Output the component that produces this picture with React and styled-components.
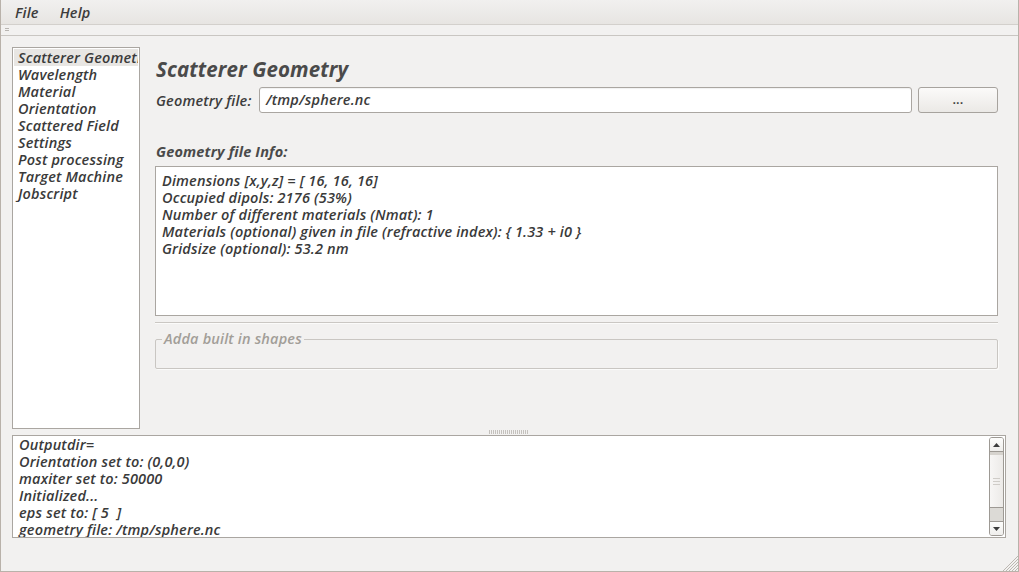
import React from "react";
import styled, { createGlobalStyle } from "styled-components";

const Global = createGlobalStyle`
  html, body { margin: 0; padding: 0; background: #f2f1f0; }
  body { font-family: "Open Sans", "DejaVu Sans", sans-serif; font-style: italic; font-weight: 600; color: #3c3c3c; letter-spacing: 0.17px; }
  * { box-sizing: border-box; }
`;

const Window = styled.div`
  width: 1019px;
  height: 572px;
  background: #f2f1f0;
  border-left: 1px solid #b9b2aa;
  border-right: 1px solid #b9b2aa;
  border-bottom: 1px solid #b9b2aa;
  display: flex;
  flex-direction: column;
  position: relative;
  overflow: hidden;
  font-size: 14.5px;
`;

const MenuBar = styled.div`
  height: 25px;
  display: flex;
  align-items: center;
  padding-left: 14px;
  gap: 21px;
  background: linear-gradient(#f1f0ef, #e7e5e2);
  border-bottom: 1px solid #d3d0cc;
`;

const MenuItem = styled.span`
  font-size: 14.5px;
  color: #3c3c3c;
`;

const ToolStrip = styled.div`
  height: 11px;
  border-bottom: 1px solid #c9c6c2;
  display: flex;
  align-items: center;
  padding-left: 4px;
`;

const Grip = styled.div`
  width: 4px;
  height: 3px;
  border-top: 1px solid #b8b5b1;
  border-bottom: 1px solid #b8b5b1;
  margin-top: -2px;
`;

const Body = styled.div`
  flex: 1;
  display: flex;
  flex-direction: column;
  padding: 11px 12px 0 11px;
`;

const TopArea = styled.div`
  display: flex;
  height: 382px;
  gap: 15px;
`;

const NavList = styled.div`
  width: 128px;
  height: 382px;
  background: #fff;
  border: 1px solid #aaa6a1;
  padding: 1px;
`;

const NavItem = styled.div`
  height: 17px;
  line-height: 17px;
  padding-left: 4px;
  font-size: 14.5px;
  white-space: nowrap;
  overflow: hidden;
  color: #3a3a3a;
  background: ${(p) => (p.$selected ? "#e8e6e3" : "transparent")};
`;

const Panel = styled.div`
  width: 843px;
  display: flex;
  flex-direction: column;
  padding-top: 9px;
`;

const Title = styled.div`
  font-size: 20.5px;
  font-weight: 700;
  letter-spacing: 0.1px;
  color: #4a4a4a;
  height: 26px;
  line-height: 26px;
  padding-left: 1px;
`;

const FileRow = styled.div`
  display: flex;
  align-items: center;
  margin-top: 5px;
  height: 26px;
`;

const Label = styled.span`
  font-size: 14.5px;
  width: 104px;
  padding-left: 1px;
  color: #3c3c3c;
`;

const TextInput = styled.div`
  width: 653px;
  height: 26px;
  background: #fff;
  border: 1px solid #aaa6a1;
  border-radius: 3px;
  box-shadow: inset 0 1px 1px rgba(0,0,0,0.06);
  font-size: 14.5px;
  line-height: 24px;
  padding-left: 6px;
`;

const Button = styled.div`
  width: 80px;
  height: 26px;
  margin-left: 6px;
  border: 1px solid #a7a39e;
  border-radius: 3px;
  background: linear-gradient(#fbfaf9, #ebe9e6);
  display: flex;
  align-items: center;
  justify-content: center;
  font-size: 13px;
  font-style: normal;
  color: #3c3c3c;
  padding-bottom: 2px;
`;

const SectionLabel = styled.div`
  font-size: 14.5px;
  font-weight: 700;
  margin-top: 29px;
  height: 20px;
  line-height: 20px;
  padding-left: 1px;
  color: #4a4a4a;
`;

const InfoBox = styled.div`
  margin-top: 4px;
  height: 150px;
  background: #fff;
  border: 1px solid #aaa6a1;
  padding: 5px 6px;
`;

const Line = styled.div`
  height: 17px;
  line-height: 17px;
  font-size: 14.5px;
  white-space: pre;
  color: #3a3a3a;
`;

const Separator = styled.div`
  margin-top: 6px;
  height: 2px;
  border-top: 1px solid #cac7c3;
  border-bottom: 1px solid #fbfbfa;
`;

const GroupBox = styled.fieldset`
  margin: 7px 0 0 0;
  padding: 0;
  height: 38px;
  border: 1px solid #c9c6c2;
  border-radius: 2px;
  box-shadow: 1px 1px 0 #fbfbfa;
`;

const Legend = styled.legend`
  margin-left: 6px;
  padding: 0 2px;
  font-size: 14.5px;
  line-height: 16px;
  color: #a29e98;
`;

const SplitterHandle = styled.div`
  height: 6px;
  display: flex;
  justify-content: center;
  align-items: flex-start;
`;

const Dots = styled.div`
  width: 40px;
  height: 4px;
  background: repeating-linear-gradient(90deg, #c4c1bd 0 1px, transparent 1px 2px);
  margin-top: 1px;
`;

const LogBox = styled.div`
  width: 994px;
  height: 103px;
  background: #fff;
  border: 1px solid #aaa6a1;
  display: flex;
  overflow: hidden;
`;

const LogText = styled.div`
  flex: 1;
  padding: 0 6px;
  overflow: hidden;
`;

const ScrollBar = styled.div`
  width: 15px;
  margin: 1px 1px 1px 0;
  border: 1px solid #9d9994;
  border-radius: 3px;
  display: flex;
  flex-direction: column;
  background: #fff;
  overflow: hidden;
`;

const ArrowBtn = styled.div`
  height: 14px;
  display: flex;
  align-items: center;
  justify-content: center;
  background: linear-gradient(#fdfdfc, #efeeec);
  border-${(p) => (p.$up ? "bottom" : "top")}: 1px solid #9d9994;
`;

const Thumb = styled.div`
  height: 56px;
  background: linear-gradient(90deg, #f7f6f5, #eceae8);
  border-top: 3px solid #d6d3ce;
  border-bottom: 1px solid #9d9994;
  display: flex;
  flex-direction: column;
  align-items: center;
  justify-content: center;
  gap: 2px;
`;

const ThumbLine = styled.div`
  width: 7px;
  height: 1px;
  background: #cfccc8;
`;

const Track = styled.div`
  flex: 1;
  background: #dcdad6;
`;

const SizeGrip = styled.svg`
  position: absolute;
  right: 0;
  bottom: 0;
`;

const navItems = [
  "Scatterer Geometry",
  "Wavelength",
  "Material",
  "Orientation",
  "Scattered Field",
  "Settings",
  "Post processing",
  "Target Machine",
  "Jobscript",
];

const infoLines = [
  "Dimensions [x,y,z] = [ 16, 16, 16]",
  "Occupied dipols: 2176 (53%)",
  "Number of different materials (Nmat): 1",
  "Materials (optional) given in file (refractive index): { 1.33 + i0 }",
  "Gridsize (optional): 53.2 nm",
];

const logLines = [
  "Outputdir=",
  "Orientation set to: (0,0,0)",
  "maxiter set to: 50000",
  "Initialized...",
  "eps set to: [ 5  ]",
  "geometry file: /tmp/sphere.nc",
];

export default function App() {
  return (
    <>
      <Global />
      <Window>
        <MenuBar>
          <MenuItem>File</MenuItem>
          <MenuItem>Help</MenuItem>
        </MenuBar>
        <ToolStrip>
          <Grip />
        </ToolStrip>
        <Body>
          <TopArea>
            <NavList>
              {navItems.map((n, i) => (
                <NavItem key={n} $selected={i === 0}>{n}</NavItem>
              ))}
            </NavList>
            <Panel>
              <Title>Scatterer Geometry</Title>
              <FileRow>
                <Label>Geometry file:</Label>
                <TextInput>/tmp/sphere.nc</TextInput>
                <Button>...</Button>
              </FileRow>
              <SectionLabel>Geometry file Info:</SectionLabel>
              <InfoBox>
                {infoLines.map((l) => (
                  <Line key={l}>{l}</Line>
                ))}
              </InfoBox>
              <Separator />
              <GroupBox>
                <Legend>Adda built in shapes</Legend>
              </GroupBox>
            </Panel>
          </TopArea>
          <SplitterHandle>
            <Dots />
          </SplitterHandle>
          <LogBox>
            <LogText>
              {logLines.map((l) => (
                <Line key={l}>{l}</Line>
              ))}
            </LogText>
            <ScrollBar>
              <ArrowBtn $up>
                <svg width="7" height="4" viewBox="0 0 7 4"><path d="M0 4 L3.5 0 L7 4 Z" fill="#3c3c3c" /></svg>
              </ArrowBtn>
              <Thumb>
                <ThumbLine />
                <ThumbLine />
                <ThumbLine />
              </Thumb>
              <Track />
              <ArrowBtn>
                <svg width="7" height="4" viewBox="0 0 7 4"><path d="M0 0 L3.5 4 L7 0 Z" fill="#3c3c3c" /></svg>
              </ArrowBtn>
            </ScrollBar>
          </LogBox>
        </Body>
        <SizeGrip width="16" height="16" viewBox="0 0 16 16">
          <g stroke="#bcb7b1" strokeWidth="1">
            <line x1="16" y1="1" x2="1" y2="16" />
            <line x1="16" y1="4" x2="4" y2="16" />
            <line x1="16" y1="7" x2="7" y2="16" />
            <line x1="16" y1="10" x2="10" y2="16" />
            <line x1="16" y1="13" x2="13" y2="16" />
          </g>
        </SizeGrip>
      </Window>
    </>
  );
}
